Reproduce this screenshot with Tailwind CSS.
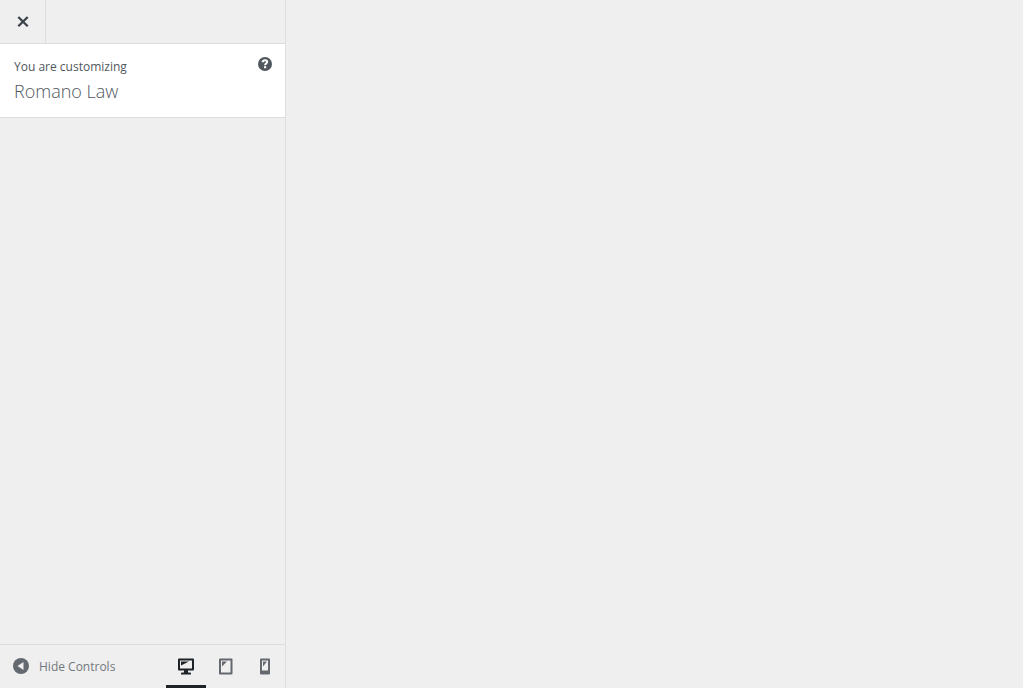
<!DOCTYPE html>
<html lang="en">
<head>
<meta charset="utf-8">
<meta name="viewport" content="width=device-width, initial-scale=1">
<title>Customize: Romano Law</title>
<script src="https://cdn.jsdelivr.net/npm/@tailwindcss/browser@4"></script>
</head>
<body class="flex h-screen overflow-hidden bg-white pr-px pb-px font-['Open_Sans',sans-serif] text-[12px] text-[#50575e]">
  <aside class="flex w-[286px] shrink-0 flex-col border-r border-[#dfdfe0] bg-[#efefef]">
    <header class="flex h-11 shrink-0 border-b border-[#dcdcde]">
      <button type="button" aria-label="Close the Customizer" class="flex w-[46px] items-center justify-center border-r border-[#dcdcde] text-[#3c434a]">
        <svg class="size-5" viewBox="0 0 20 20" fill="none" stroke="currentColor" stroke-width="2.3" aria-hidden="true"><path d="M5.3 5l9.4 9.2M14.7 5l-9.4 9.2"/></svg>
      </button>
    </header>
    <section class="flex h-[74px] shrink-0 items-start justify-between border-b border-[#dcdcde] bg-white pt-3 pr-2.5 pl-3.5">
      <h1 class="font-normal">
        <span class="block leading-[21px]">You are customizing</span>
        <strong class="block text-[18px] leading-7 font-light">Romano Law</strong>
      </h1>
      <button type="button" aria-label="Help" class="-mt-0.5 text-[#50575e]">
        <svg class="size-5" viewBox="0 0 20 20" aria-hidden="true">
          <circle cx="10" cy="10" r="7" fill="currentColor"/>
          <path d="M7.6 8.2C7.8 5.5 12.4 5.5 12.2 8C12.1 9.4 10.1 9.4 10.1 11.2" fill="none" stroke="#fff" stroke-width="2"/>
          <path d="M9 12.2h2.2v2H9z" fill="#fff"/>
        </svg>
      </button>
    </section>
    <div class="flex-1"></div>
    <footer class="flex h-11 shrink-0 justify-between border-t border-[#dcdcde] text-[#646970]">
      <button type="button" class="flex items-center gap-2 pl-[11px]">
        <svg class="size-5" viewBox="0 0 20 20" aria-hidden="true"><circle cx="10" cy="9" r="8" fill="currentColor"/><path d="M12.5 5v8L6.5 9z" fill="#efefef"/></svg>
        <span class="text-[#72777c]">Hide Controls</span>
      </button>
      <div class="flex pr-px">
        <button type="button" aria-label="Enter desktop preview mode" aria-pressed="true" class="flex w-10 items-center justify-center border-b-3 border-[#1d2327] pt-[3px] text-[#1d2327]">
          <svg class="size-5" viewBox="0 0 20 20" aria-hidden="true"><path fill="currentColor" fill-rule="evenodd" d="M3 1.5h14q1 0 1 1V12.500q0 1-1 1h-5V15.500h2q1 0 1 1V17.500H5V16.500q0-1 1-1h2V13.500H3q-1 0-1-1V2.500q0-1 1-1zM4 3.500V11.500h12V3.500zM5 4.500h8L5 8.500z"/></svg>
        </button>
        <button type="button" aria-label="Enter tablet preview mode" aria-pressed="false" class="flex w-10 items-center justify-center">
          <svg class="size-5" viewBox="0 0 20 20" aria-hidden="true"><path fill="currentColor" fill-rule="evenodd" d="M4 1.500h11.500q1 0 1 1V16.500q0 1-1 1H4q-1 0-1-1V2.500q0-1 1-1zM5 3.500V15.500h9.500V3.500zM6 4.500h5L6 9.500z"/></svg>
        </button>
        <button type="button" aria-label="Enter mobile preview mode" aria-pressed="false" class="flex w-[38px] items-center justify-center">
          <svg class="size-5" viewBox="0 0 20 20" aria-hidden="true"><path fill="currentColor" fill-rule="evenodd" d="M6 1.500h8q1 0 1 1V16.500q0 1-1 1H6q-1 0-1-1V2.500q0-1 1-1zM7 3.500V13.500h6V3.500zM8 4.500h4L8 9.500z"/></svg>
        </button>
      </div>
    </footer>
  </aside>
  <main class="flex-1 bg-[#efefef]" aria-label="Site preview"></main>
</body>
</html>
